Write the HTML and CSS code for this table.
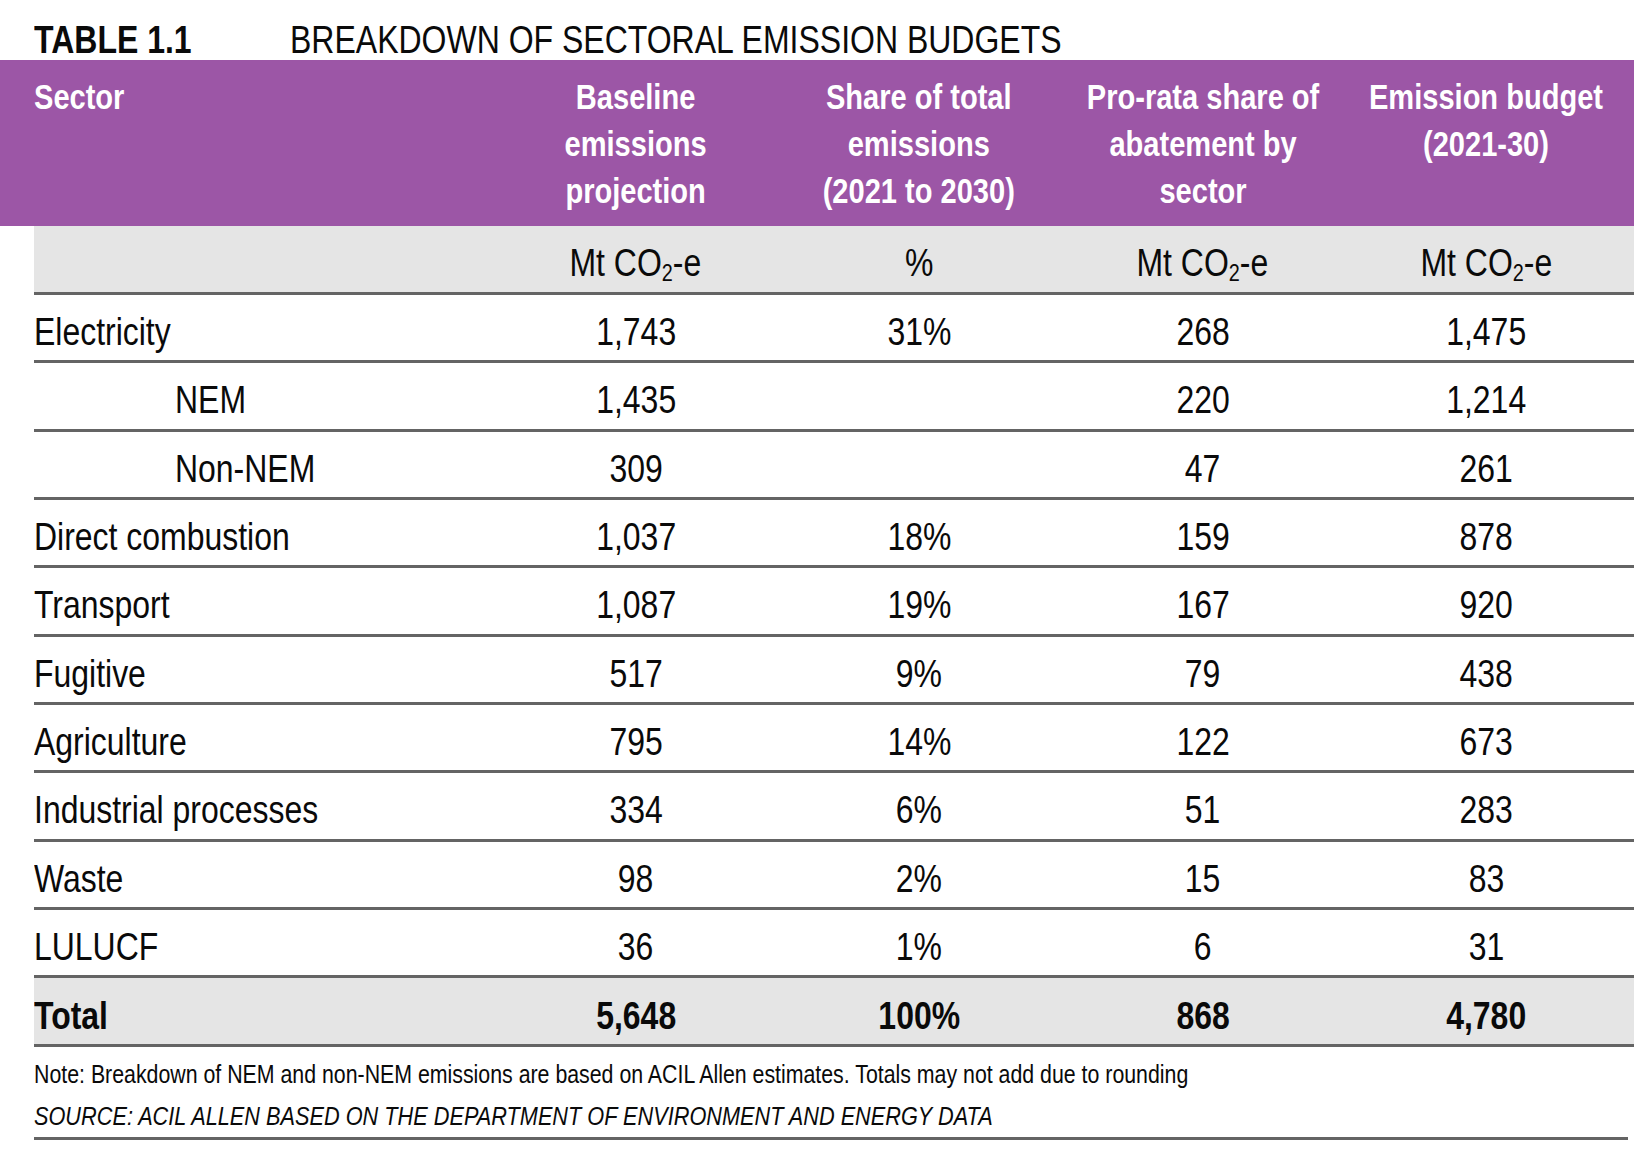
FILE: index.html
```html
<!DOCTYPE html>
<html lang="en">
<head>
<meta charset="utf-8">
<title>Table 1.1 Breakdown of sectoral emission budgets</title>
<link rel="stylesheet" href="styles.css">
</head>
<body>
<div class="page">
  <h1 class="title"><span class="title-num"><span class="t">TABLE 1.1</span></span><span class="title-text"><span class="t">BREAKDOWN OF SECTORAL EMISSION BUDGETS</span></span></h1>

  <div class="head">
    <div class="row">
      <div class="c c-left"><span class="t">Sector</span></div>
      <div class="c"><span class="t">Baseline<br>emissions<br>projection</span></div>
      <div class="c"><span class="t">Share of total<br>emissions<br>(2021 to 2030)</span></div>
      <div class="c"><span class="t">Pro-rata share of<br>abatement by<br>sector</span></div>
      <div class="c"><span class="t">Emission budget<br>(2021-30)</span></div>
    </div>
  </div>

  <div class="body">
    <div class="row units">
      <div class="c c-left"></div>
      <div class="c"><span class="t">Mt CO<sub>2</sub>-e</span></div>
      <div class="c"><span class="t">%</span></div>
      <div class="c"><span class="t">Mt CO<sub>2</sub>-e</span></div>
      <div class="c"><span class="t">Mt CO<sub>2</sub>-e</span></div>
    </div>
    <div class="row data">
      <div class="c c-left"><span class="t">Electricity</span></div>
      <div class="c"><span class="t">1,743</span></div><div class="c"><span class="t">31%</span></div><div class="c"><span class="t">268</span></div><div class="c"><span class="t">1,475</span></div>
    </div>
    <div class="row data">
      <div class="c c-left c-sub"><span class="t">NEM</span></div>
      <div class="c"><span class="t">1,435</span></div><div class="c"></div><div class="c"><span class="t">220</span></div><div class="c"><span class="t">1,214</span></div>
    </div>
    <div class="row data">
      <div class="c c-left c-sub"><span class="t">Non-NEM</span></div>
      <div class="c"><span class="t">309</span></div><div class="c"></div><div class="c"><span class="t">47</span></div><div class="c"><span class="t">261</span></div>
    </div>
    <div class="row data">
      <div class="c c-left"><span class="t">Direct combustion</span></div>
      <div class="c"><span class="t">1,037</span></div><div class="c"><span class="t">18%</span></div><div class="c"><span class="t">159</span></div><div class="c"><span class="t">878</span></div>
    </div>
    <div class="row data">
      <div class="c c-left"><span class="t">Transport</span></div>
      <div class="c"><span class="t">1,087</span></div><div class="c"><span class="t">19%</span></div><div class="c"><span class="t">167</span></div><div class="c"><span class="t">920</span></div>
    </div>
    <div class="row data">
      <div class="c c-left"><span class="t">Fugitive</span></div>
      <div class="c"><span class="t">517</span></div><div class="c"><span class="t">9%</span></div><div class="c"><span class="t">79</span></div><div class="c"><span class="t">438</span></div>
    </div>
    <div class="row data">
      <div class="c c-left"><span class="t">Agriculture</span></div>
      <div class="c"><span class="t">795</span></div><div class="c"><span class="t">14%</span></div><div class="c"><span class="t">122</span></div><div class="c"><span class="t">673</span></div>
    </div>
    <div class="row data">
      <div class="c c-left"><span class="t">Industrial processes</span></div>
      <div class="c"><span class="t">334</span></div><div class="c"><span class="t">6%</span></div><div class="c"><span class="t">51</span></div><div class="c"><span class="t">283</span></div>
    </div>
    <div class="row data">
      <div class="c c-left"><span class="t">Waste</span></div>
      <div class="c"><span class="t">98</span></div><div class="c"><span class="t">2%</span></div><div class="c"><span class="t">15</span></div><div class="c"><span class="t">83</span></div>
    </div>
    <div class="row data">
      <div class="c c-left"><span class="t">LULUCF</span></div>
      <div class="c"><span class="t">36</span></div><div class="c"><span class="t">1%</span></div><div class="c"><span class="t">6</span></div><div class="c"><span class="t">31</span></div>
    </div>
    <div class="row total">
      <div class="c c-left"><span class="t">Total</span></div>
      <div class="c"><span class="t">5,648</span></div><div class="c"><span class="t">100%</span></div><div class="c"><span class="t">868</span></div><div class="c"><span class="t">4,780</span></div>
    </div>
  </div>

  <div class="foot">
    <p class="note"><span class="t">Note: Breakdown of NEM and non-NEM emissions are based on ACIL Allen estimates. Totals may not add due to rounding</span></p>
    <p class="source"><span class="t">SOURCE: ACIL ALLEN BASED ON THE DEPARTMENT OF ENVIRONMENT AND ENERGY DATA</span></p>
  </div>
</div>
</body>
</html>
```

FILE: styles.css
```css
html, body {
  margin: 0;
  padding: 0;
  background: #ffffff;
}

body {
  width: 1634px;
  height: 1162px;
  overflow: hidden;
  font-family: "Liberation Sans Narrow", "Arial Narrow", "Liberation Sans", Arial, sans-serif;
  color: #0a0a0a;
}

.page {
  width: 1634px;
}

/* condensed glyphs: no narrow face is installed, so squeeze the regular one */
.t {
  display: inline-block;
  transform: scaleX(0.83);
  transform-origin: center center;
}

.c-left .t,
.title .t,
.foot .t {
  transform-origin: left center;
}

.title .t {
  transform: scaleX(0.842);
}

.note .t {
  transform: scaleX(0.82);
}

.source .t {
  transform: scaleX(0.835);
}

.title {
  margin: 0;
  box-sizing: border-box;
  height: 60px;
  padding: 21px 0 0 34px;
  font-size: 38px;
  line-height: 38px;
  font-weight: normal;
  display: flex;
  white-space: nowrap;
}

.title-num {
  width: 256px;
  font-weight: bold;
}

.row {
  display: grid;
  grid-template-columns: 460px repeat(4, 283.5px) 1fr;
}

.c {
  text-align: center;
  white-space: nowrap;
}

.c-left {
  text-align: left;
}

.c-sub {
  padding-left: 141px;
}

.head {
  background: #9c56a6;
  color: #ffffff;
  box-sizing: border-box;
  height: 166px;
  padding: 13px 0 0 34px;
  font-weight: bold;
  font-size: 35px;
  line-height: 47px;
}

.body {
  margin-left: 34px;
  font-size: 38.5px;
}

.units {
  background: #e5e5e5;
  height: 66px;
  border-bottom: 3px solid #646464;
  line-height: 74px;
}

.units sub {
  font-size: 0.62em;
  vertical-align: -0.22em;
  line-height: 0;
}

.data {
  height: 65.33px;
  border-bottom: 3px solid #646464;
  line-height: 74px;
}

.total {
  background: #e5e5e5;
  height: 66px;
  border-bottom: 3px solid #646464;
  line-height: 76px;
  font-weight: bold;
}

.foot {
  margin-left: 34px;
  width: 1594px;
  border-bottom: 3px solid #646464;
  padding-top: 6px;
  padding-bottom: 0;
}

.note,
.source {
  margin: 0;
  font-size: 26px;
  line-height: 42px;
  white-space: nowrap;
}

.source {
  font-style: italic;
}
```
